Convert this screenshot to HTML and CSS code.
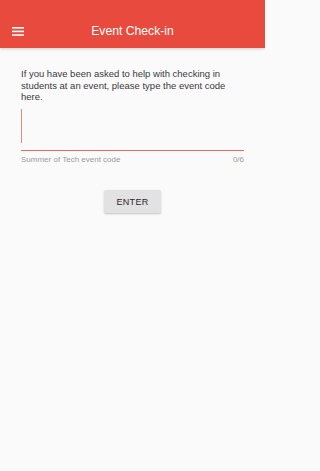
FILE: index.html
```html
<!DOCTYPE html>
<html>
<head>
<meta charset="utf-8">
<link rel="stylesheet" href="styles.css">
</head>
<body>
<div class="screen">
<header class="appbar">
  <span class="menu">
    <svg width="12" height="9" viewBox="0 0 12 9"><rect x="0" y="0" width="12" height="1.6" fill="#fff"/><rect x="0" y="3.6" width="12" height="1.6" fill="#fff"/><rect x="0" y="7.2" width="12" height="1.6" fill="#fff"/></svg>
  </span>
  <h1 class="title">Event Check-in</h1>
</header>
<main class="content">
  <p class="intro">If you have been asked to help with checking in students at an event, please type the event code here.</p>
  <div class="field">
    <div class="input"><span class="caret"></span></div>
    <div class="underline"></div>
    <div class="helper"><span>Summer of Tech event code</span><span>0/6</span></div>
  </div>
  <div class="actions"><button class="btn">ENTER</button></div>
</main>
</div>
</body>
</html>
```
FILE: styles.css
```css
html, body { margin: 0; padding: 0; }
body {
  background: #fafafa;
  font-family: "Liberation Sans", Arial, sans-serif;
  color: #333;
}
.screen {
  width: 265px;
  height: 471px;
  overflow: hidden;
  background: #fafafa;
}
.appbar {
  height: 48px;
  background: #e84b3e;
  display: flex;
  align-items: center;
  justify-content: center;
  position: relative;
  box-shadow: 0 1px 3px rgba(0,0,0,0.18);
}
.menu {
  position: absolute;
  left: 12px;
  top: 27px;
  display: flex;
}
.title {
  margin: 0;
  font-size: 12.2px;
  font-weight: normal;
  color: #fff;
  padding-top: 14px;
}
.content {
  padding: 0 21px;
}
.intro {
  margin: 20px 0 0;
  font-size: 9.5px;
  line-height: 11.6px;
  color: #3a3a3a;
}
.field {
  margin-top: 5px;
}
.input {
  height: 42px;
  display: flex;
  align-items: flex-start;
}
.caret {
  display: block;
  width: 1px;
  height: 34px;
  margin-top: 1px;
  background: #e08a8a;
}
.underline {
  height: 1.5px;
  background: #e66a62;
}
.helper {
  display: flex;
  justify-content: space-between;
  font-size: 8px;
  color: #9a9a9a;
  margin-top: 4px;
}
.actions {
  display: flex;
  justify-content: center;
  margin-top: 26px;
}
.btn {
  width: 57px;
  height: 23px;
  border: none;
  border-radius: 2px;
  background: #e2e2e2;
  box-shadow: 0 1px 2px rgba(0,0,0,0.22);
  font-family: "Liberation Sans", Arial, sans-serif;
  font-size: 9px;
  font-weight: normal;
  color: #2a2a2a;
  letter-spacing: 0.3px;
  padding: 0;
}
```
